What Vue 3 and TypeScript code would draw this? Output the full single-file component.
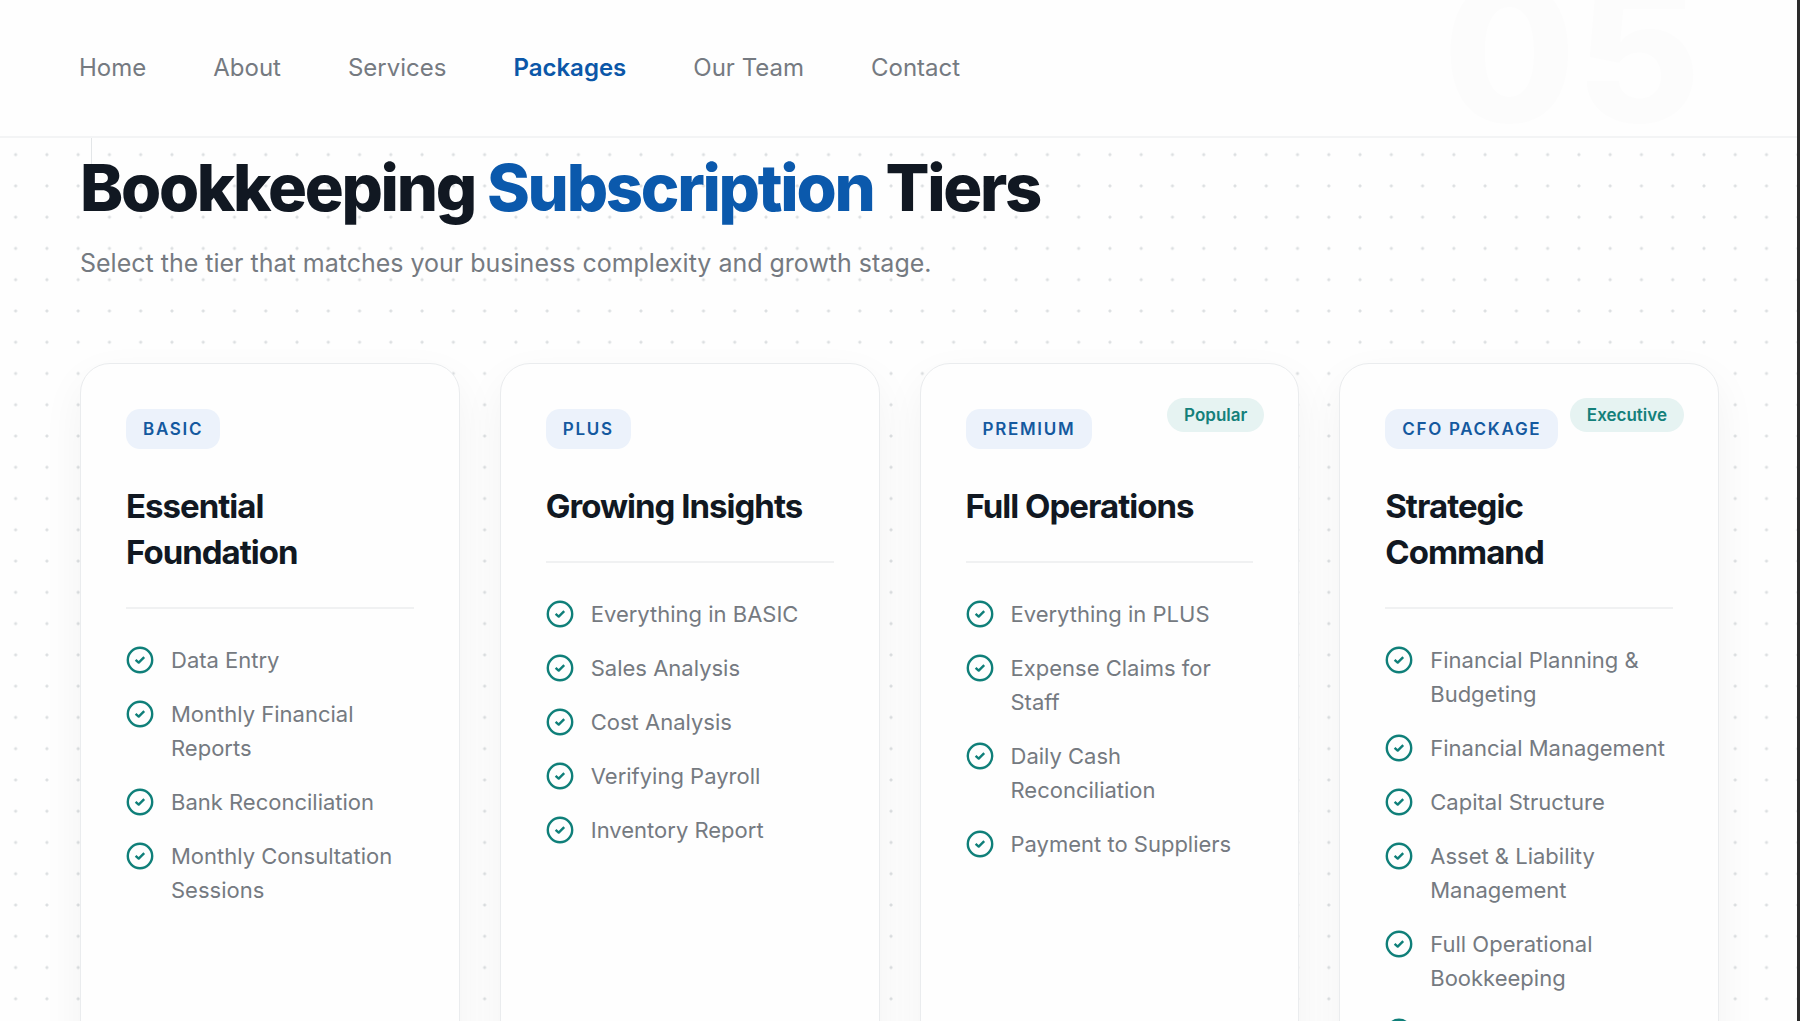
<script setup lang="ts">
interface NavLink {
  label: string
  active?: boolean
}

interface Tier {
  tag: string
  title: string
  badge?: string
  features: string[]
}

const links: NavLink[] = [
  { label: 'Home' },
  { label: 'About' },
  { label: 'Services' },
  { label: 'Packages', active: true },
  { label: 'Our Team' },
  { label: 'Contact' },
]

const tiers: Tier[] = [
  {
    tag: 'BASIC',
    title: 'Essential Foundation',
    features: ['Data Entry', 'Monthly Financial Reports', 'Bank Reconciliation', 'Monthly Consultation Sessions'],
  },
  {
    tag: 'PLUS',
    title: 'Growing Insights',
    features: ['Everything in BASIC', 'Sales Analysis', 'Cost Analysis', 'Verifying Payroll', 'Inventory Report'],
  },
  {
    tag: 'PREMIUM',
    title: 'Full Operations',
    badge: 'Popular',
    features: ['Everything in PLUS', 'Expense Claims for Staff', 'Daily Cash Reconciliation', 'Payment to Suppliers'],
  },
  {
    tag: 'CFO PACKAGE',
    title: 'Strategic Command',
    badge: 'Executive',
    features: [
      'Financial Planning & Budgeting',
      'Financial Management',
      'Capital Structure',
      'Asset & Liability Management',
      'Full Operational Bookkeeping',
      '',
    ],
  },
]
</script>

<template>
  <div class="page">
    <header class="header">
      <span class="ghost" aria-hidden="true">05</span>
      <nav class="nav" aria-label="Main">
        <a
          v-for="link in links"
          :key="link.label"
          href="#"
          class="nav-link"
          :class="{ active: link.active }"
          :aria-current="link.active ? 'page' : undefined"
        >{{ link.label }}</a>
      </nav>
    </header>

    <main class="main">
      <span class="rule" aria-hidden="true"></span>
      <h1 class="heading">Bookkeeping <span class="accent">Subscription</span> Tiers</h1>
      <p class="lead">Select the tier that matches your business complexity and growth stage.</p>

      <section class="tiers">
        <article v-for="tier in tiers" :key="tier.tag" class="card">
          <span v-if="tier.badge" class="badge">{{ tier.badge }}</span>
          <span class="tag">{{ tier.tag }}</span>
          <h2 class="title">{{ tier.title }}</h2>
          <ul class="features">
            <li v-for="(feature, i) in tier.features" :key="i" class="feature">
              <svg class="check" viewBox="0 0 28 28" aria-hidden="true">
                <circle cx="14" cy="14" r="12.2" />
                <path d="M9.6 13.8 12.7 16.6 18.2 11.2" />
              </svg>
              <span>{{ feature }}</span>
            </li>
          </ul>
        </article>
      </section>
    </main>
  </div>
</template>

<style>
body {
  margin: 0;
  background: #fefefe;
}
</style>

<style scoped>
.page {
  box-sizing: border-box;
  height: 100vh;
  overflow: hidden;
  display: flex;
  flex-direction: column;
  border-right: 3px solid #2b2b2b;
  background: #fefefe;
  color: #757a81;
  font-family: Inter, "Liberation Sans", sans-serif;
}

.header {
  position: relative;
  flex: none;
  box-sizing: border-box;
  height: 138px;
  padding: 0 79px;
  display: flex;
  align-items: center;
  overflow: hidden;
  background: #fefefe;
  border-bottom: 2px solid #f3f4f5;
}

.ghost {
  position: absolute;
  right: 96px;
  bottom: -36px;
  font-size: 192px;
  line-height: 240px;
  font-weight: 800;
  color: #fcfcfc;
}

.nav {
  position: relative;
  display: flex;
  gap: 67px;
}

.nav-link {
  color: inherit;
  font-size: 24px;
  line-height: 32px;
  text-decoration: none;
}

.nav-link.active {
  color: #0b57a8;
  font-weight: 600;
}

.main {
  position: relative;
  flex: 1 0 auto;
  padding: 10px 78px 48px 80px;
  background-image: radial-gradient(circle at center, #dcdfe1 0, #dcdfe1 1px, transparent 2px);
  background-size: calc(344px / 11) calc(344px / 11);
  background-position: 0 1px;
}

.rule {
  position: absolute;
  left: 91px;
  top: 0;
  width: 1px;
  height: 48px;
  background: #e3e6e8;
}

.heading {
  position: relative;
  margin: 0;
  color: #111822;
  font-size: 65px;
  line-height: 80px;
  font-weight: 800;
  letter-spacing: -0.035em;
}

.accent {
  color: #0b59ac;
}

.lead {
  margin: 15px 0 0;
  font-size: 25px;
  line-height: 40px;
}

.tiers {
  margin-top: 80px;
  display: grid;
  grid-template-columns: repeat(4, minmax(0, 1fr));
  gap: 40px;
}

.card {
  position: relative;
  padding: 45px;
  border: 1px solid #eaecee;
  border-radius: 30px;
  background: #fefefe;
  box-shadow: 0 16px 44px rgba(17, 24, 34, 0.05);
}

.tag {
  display: inline-block;
  padding: 0 17px;
  border-radius: 14px;
  background: #ecf2fb;
  color: #14599f;
  font-size: 17px;
  line-height: 40px;
  font-weight: 600;
  letter-spacing: 0.1em;
}

.badge {
  position: absolute;
  top: 34px;
  right: 34px;
  padding: 0 17px;
  border-radius: 17px;
  background: #e6f3f2;
  color: #14807a;
  font-size: 17px;
  line-height: 34px;
  font-weight: 600;
}

.title {
  margin: 34px 0 0;
  padding-bottom: 32px;
  border-bottom: 2px solid #f0f1f2;
  color: #111822;
  font-size: 33px;
  line-height: 46px;
  font-weight: 700;
  letter-spacing: -0.03em;
}

.features {
  margin: 34px 0 0;
  padding: 0;
  list-style: none;
  display: grid;
  gap: 20px;
}

.feature {
  display: flex;
  align-items: flex-start;
  gap: 17px;
  font-size: 22px;
  line-height: 34px;
}

.check {
  flex: none;
  width: 28px;
  height: 28px;
  margin-top: 3px;
  fill: none;
  stroke: #0f7f79;
  stroke-width: 2.4;
  stroke-linejoin: round;
}
</style>
